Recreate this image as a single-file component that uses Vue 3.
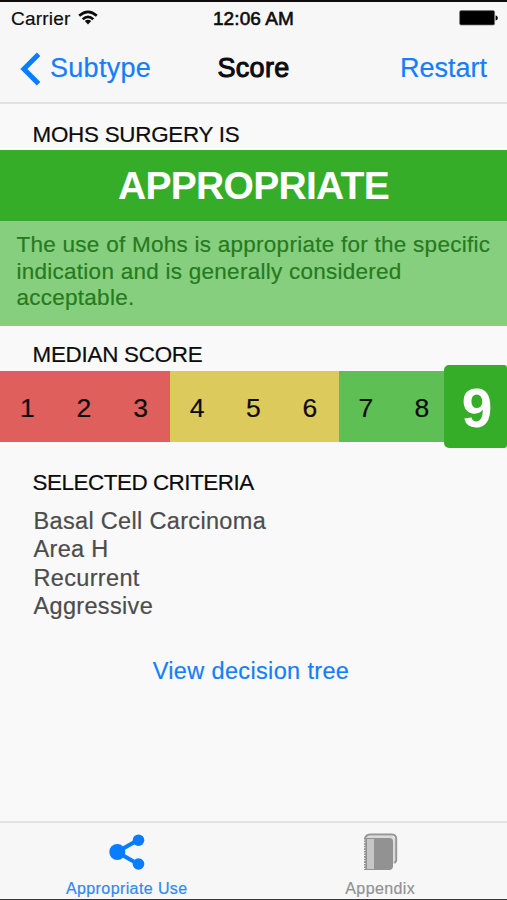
<script setup>
const scores = [1, 2, 3, 4, 5, 6, 7, 8, 9]
const selected = 9
const criteria = ['Basal Cell Carcinoma', 'Area H', 'Recurrent', 'Aggressive']

function band(n) {
  if (n <= 3) return 'low'
  if (n <= 6) return 'mid'
  return 'high'
}
</script>

<template>
  <div class="screen">
    <header class="top">
      <div class="status">
        <div class="carrier">
          <span>Carrier</span>
          <svg class="wifi" width="20" height="16" viewBox="0 0 20 16">
            <path d="M1.2 5.8Q10 -2 18.8 5.8" />
            <path d="M4.7 9.3Q10 4.4 15.3 9.3" />
            <path class="dot" d="M6.8 11.1Q10 8.6 13.2 11.1L10 14.5Z" />
          </svg>
        </div>
        <span class="time">12:06 AM</span>
        <svg class="battery" width="40" height="16" viewBox="0 0 40 16">
          <rect x="0.6" y="0.6" width="35" height="14.4" rx="1.5" />
          <path d="M36.6 5.2Q38.8 5.8 38.8 7.9T36.6 10.6Z" />
        </svg>
      </div>
      <nav class="nav">
        <a class="back">
          <svg width="22" height="36" viewBox="0 0 22 36">
            <path d="M18.6 3.2L3.9 18L18.6 32.8" />
          </svg>
          <span>Subtype</span>
        </a>
        <h1>Score</h1>
        <a class="restart">Restart</a>
      </nav>
    </header>

    <main>
      <h2 class="first">MOHS SURGERY IS</h2>
      <div class="verdict">APPROPRIATE</div>
      <p class="explain">The use of Mohs is appropriate for the specific<br />indication and is generally considered<br />acceptable.</p>

      <h2 class="median">MEDIAN SCORE</h2>
      <div class="scale">
        <div v-for="n in scores" :key="n" class="cell" :class="band(n)">
          <span v-if="n !== selected">{{ n }}</span>
        </div>
        <div class="tile">{{ selected }}</div>
      </div>

      <h2 class="chosen">SELECTED CRITERIA</h2>
      <ul>
        <li v-for="c in criteria" :key="c">{{ c }}</li>
      </ul>
      <a class="tree">View decision tree</a>
    </main>

    <footer>
      <div class="tab active">
        <svg width="38" height="38" viewBox="0 0 38 38">
          <path d="M30 7L9 19L30 31" />
          <circle cx="9.3" cy="19" r="8" />
          <circle cx="30.5" cy="7.2" r="5.8" />
          <circle cx="30.5" cy="31" r="5.8" />
        </svg>
        <span>Appropriate Use</span>
      </div>
      <div class="tab">
        <svg width="38" height="38" viewBox="0 0 38 38">
          <path class="pages" d="M6 4H28.5Q33 4 33 8.5V31" />
          <path class="cover" d="M4 6Q4.5 1.5 9 1.4H31Q35.2 1.6 35.2 6V27.5L33.8 30" />
          <path class="book" d="M3 5H28.5Q32 5 32 8.5V33Q32 37 28 37H3Z" />
          <rect class="spine" x="6" y="6" width="7" height="30" />
          <path class="rings" d="M3.2 6.5V37" />
        </svg>
        <span>Appendix</span>
      </div>
    </footer>
  </div>
</template>

<style>
body {
  margin: 0;
}
</style>

<style scoped>
.screen {
  box-sizing: border-box;
  width: 507px;
  height: 900px;
  display: flex;
  flex-direction: column;
  background: #f9f9f9;
  border-top: 2px solid #0c0a0b;
  border-bottom: 1px solid #39373a;
  font-family: "Liberation Sans", Arial, sans-serif;
  color: #0c0c0c;
  white-space: nowrap;
  overflow: hidden;
  -webkit-text-stroke: 0.2px currentColor;
}
.top {
  box-sizing: border-box;
  height: 102px;
  background: #f7f7f7;
  border-bottom: 2px solid #e1e1e1;
}
.status {
  height: 32px;
  display: grid;
  grid-template-columns: 1fr auto 1fr;
  align-items: center;
  padding: 0 8px 0 11px;
  font-size: 19px;
  line-height: 34px;
}
.carrier {
  display: flex;
  align-items: center;
  gap: 8px;
  letter-spacing: 0.2px;
}
.wifi {
  margin-top: -2px;
}
.wifi path {
  fill: none;
  stroke: #0c0c0c;
  stroke-width: 2.6;
}
.wifi .dot {
  fill: #0c0c0c;
  stroke: none;
}
.time {
  margin-left: -3px;
  letter-spacing: 0.1px;
  -webkit-text-stroke: 0.6px #0c0c0c;
}
.battery {
  justify-self: end;
  margin-top: -2px;
}
.battery rect {
  fill: #000;
  stroke: #777;
  stroke-width: 0.7;
}
.nav {
  height: 68px;
  display: grid;
  grid-template-columns: 1fr auto 1fr;
  align-items: center;
  padding: 0 20px;
  font-size: 27px;
  line-height: 68px;
}
.back,
.restart,
.tree {
  color: #147efb;
}
.back {
  display: flex;
  align-items: center;
  gap: 8px;
  letter-spacing: 0.3px;
}
.back path {
  fill: none;
  stroke: #0a7cff;
  stroke-width: 5;
}
h1 {
  margin: 0;
  font-size: 27px;
  font-weight: 400;
  letter-spacing: 0.3px;
  -webkit-text-stroke: 1px #0c0c0c;
}
.restart {
  justify-self: end;
}
.back span,
.nav h1,
.restart {
  line-height: 69px;
}
main {
  flex: 1;
  display: flex;
  flex-direction: column;
}
h2 {
  margin: 0;
  padding-left: 32.5px;
  font-size: 22.4px;
  font-weight: 400;
  letter-spacing: -0.25px;
  line-height: 26px;
}
.first {
  padding-top: 18px;
  padding-bottom: 2px;
}
.verdict {
  height: 71px;
  line-height: 72px;
  background: #36ad29;
  color: #fff;
  font-size: 39px;
  font-weight: 700;
  letter-spacing: -0.7px;
  text-align: center;
  -webkit-text-stroke: 0;
}
.explain {
  box-sizing: border-box;
  height: 105px;
  margin: 0;
  padding: 11px 16px 0 16.5px;
  background: #86cf7e;
  color: #267a20;
  font-size: 22.5px;
  letter-spacing: 0.26px;
  line-height: 26.5px;
}
.median {
  padding-top: 16px;
  padding-bottom: 3px;
}
.scale {
  position: relative;
  display: grid;
  grid-template-columns: repeat(3, 56.67px) repeat(3, 56.33px) repeat(3, 1fr);
  height: 71px;
}
.cell {
  box-sizing: border-box;
  height: 71px;
  padding: 1px 2px 0 0;
  font-size: 26.5px;
  line-height: 72px;
  text-align: center;
}
.low {
  background: #df5f5d;
}
.mid {
  background: #dccb5c;
}
.high {
  background: #5ec054;
}
.tile {
  position: absolute;
  top: -6px;
  right: 0;
  width: 63px;
  height: 83px;
  border-radius: 5px 3px 3px 5px;
  background: #36ad29;
  color: #fff;
  font-size: 55px;
  font-weight: 700;
  line-height: 86px;
  text-align: center;
  text-indent: 3px;
  -webkit-text-stroke: 0;
}
.chosen {
  padding-top: 28px;
  letter-spacing: -0.45px;
}
ul {
  margin: 0;
  padding: 11px 0 0 33.5px;
  list-style: none;
  color: #4c4c4c;
  font-size: 23.5px;
  letter-spacing: 0.33px;
  line-height: 28.3px;
}
.tree {
  margin-top: 37px;
  font-size: 23.5px;
  letter-spacing: 0.35px;
  line-height: 28px;
  text-align: center;
  padding-right: 5px;
}
footer {
  box-sizing: border-box;
  height: 78px;
  display: grid;
  grid-template-columns: 1fr 1fr;
  background: #f7f7f7;
  border-top: 2px solid #e1e1e1;
}
.tab {
  display: flex;
  flex-direction: column;
  align-items: center;
  padding-top: 10px;
  color: #929292;
  font-size: 16px;
  letter-spacing: 0.4px;
}
.tab span {
  line-height: 20px;
  margin-top: 8px;
}
.active {
  color: #2f8af0;
}
.active path {
  fill: none;
  stroke: #0a7cff;
  stroke-width: 4;
}
.active circle {
  fill: #0a7cff;
}
.cover {
  fill: none;
  stroke: #969696;
  stroke-width: 2;
}
.pages {
  fill: none;
  stroke: #dadada;
  stroke-width: 2.6;
}
.book {
  fill: #929292;
}
.spine {
  fill: #c6c6c6;
}
.rings {
  fill: none;
  stroke: #f7f7f7;
  stroke-width: 2.4;
  stroke-dasharray: 1 1.6;
}
</style>
